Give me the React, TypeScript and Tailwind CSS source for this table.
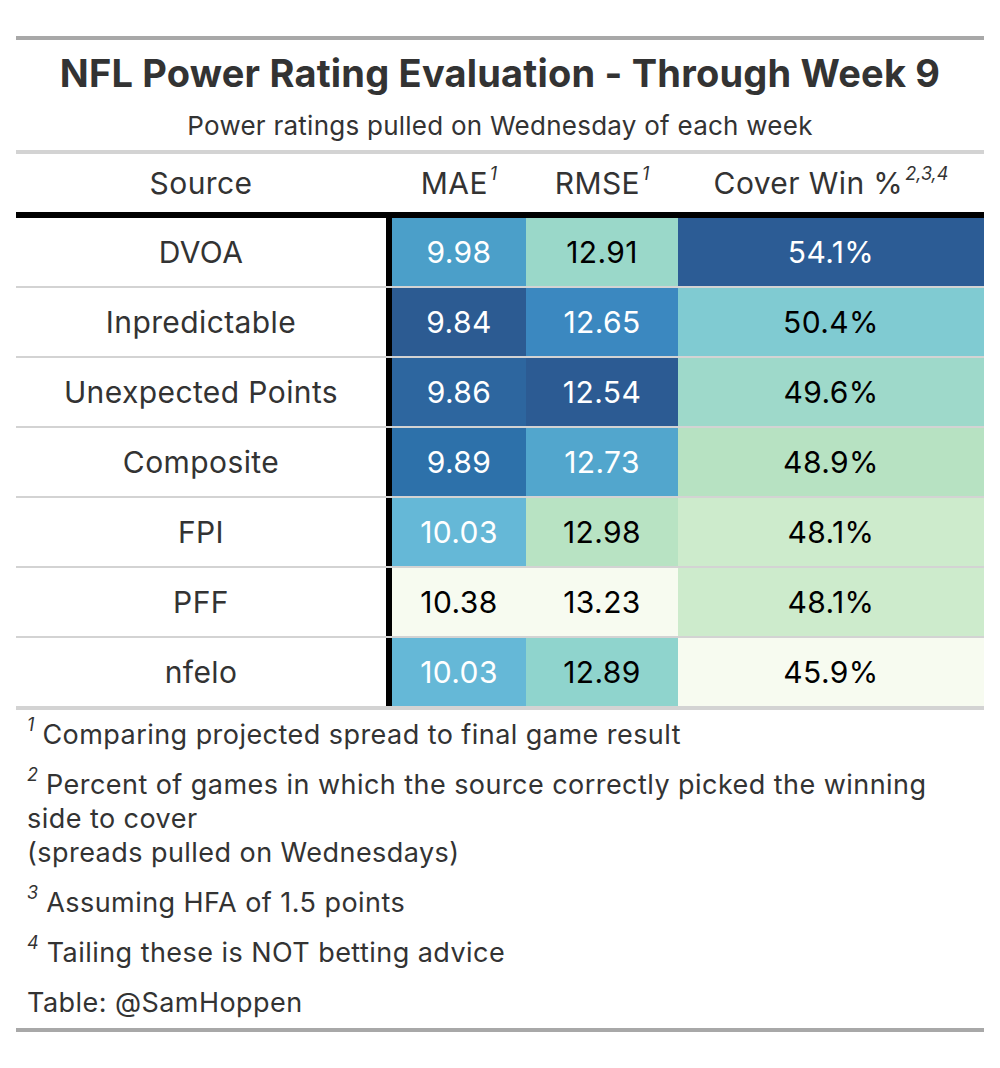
const rows = [
  { source: 'DVOA', mae: ['9.98', '#4b9fc9', true], rmse: ['12.91', '#9ad8c9', false], cover: ['54.1%', '#2c5c95', true] },
  { source: 'Inpredictable', mae: ['9.84', '#2c5b92', true], rmse: ['12.65', '#3b88c0', true], cover: ['50.4%', '#80cbd2', false] },
  { source: 'Unexpected Points', mae: ['9.86', '#2d669f', true], rmse: ['12.54', '#2c5b93', true], cover: ['49.6%', '#9ed9ca', false] },
  { source: 'Composite', mae: ['9.89', '#2d71aa', true], rmse: ['12.73', '#52a6cd', true], cover: ['48.9%', '#b7e2c2', false] },
  { source: 'FPI', mae: ['10.03', '#65b8d7', true], rmse: ['12.98', '#b8e3c3', false], cover: ['48.1%', '#cdebcc', false] },
  { source: 'PFF', mae: ['10.38', '#f7fbf0', false], rmse: ['13.23', '#f7fbf0', false], cover: ['48.1%', '#cdebcc', false] },
  { source: 'nfelo', mae: ['10.03', '#65b8d7', true], rmse: ['12.89', '#8fd4cd', false], cover: ['45.9%', '#f7fbf0', false] },
] as const;

const Sup = ({ children, tight }: { children: React.ReactNode; tight?: boolean }) => (
  <sup className={`italic text-[18px] font-normal tracking-normal -top-[0.75em] ${tight ? 'ml-0' : 'ml-[2px]'}`}>
    {children}
  </sup>
);

const Cell = ({ v }: { v: readonly [string, string, boolean] }) => (
  <div
    className={`flex items-center justify-center ${v[2] ? 'text-white' : 'text-black'}`}
    style={{ backgroundColor: v[1] }}
  >
    {v[0]}
  </div>
);

export default function App() {
  return (
    <div className="min-h-screen bg-white pt-9 px-4 text-[#333333]" style={{ fontFamily: 'Inter, "Liberation Sans", sans-serif' }}>
      <div className="w-[968px] border-t-4 border-[#a8a8a8]">
        {/* Heading */}
        <div className="h-[66px] flex items-center justify-center text-[38px] font-bold tracking-[0.2px]">
          NFL Power Rating Evaluation - Through Week 9
        </div>
        <div className="h-[38px] flex items-center justify-center text-[26px] tracking-[0.25px]">
          Power ratings pulled on Wednesday of each week
        </div>
        <div className="h-[6px] border-b-4 border-[#d3d3d3] box-content" />

        {/* Column labels */}
        <div className="grid grid-cols-[370px_6px_134px_152px_306px] h-[58px] text-[30px] tracking-[0.4px] items-center text-center border-b-[6px] border-black box-content">
          <div>Source</div>
          <div />
          <div>MAE<Sup>1</Sup></div>
          <div>RMSE<Sup>1</Sup></div>
          <div>Cover Win %<Sup>2,3,4</Sup></div>
        </div>

        {/* Body */}
        <div className="text-[30px] tracking-[0.4px]">
          {rows.map((r, i) => (
            <div
              key={r.source}
              className={`grid grid-cols-[370px_6px_134px_152px_306px] h-[68px] box-content ${
                i === rows.length - 1 ? 'border-b-4' : 'border-b-2'
              } border-[#d3d3d3]`}
            >
              <div className="flex items-center justify-center">{r.source}</div>
              <div className="bg-black" />
              <Cell v={r.mae} />
              <Cell v={r.rmse} />
              <Cell v={r.cover} />
            </div>
          ))}
        </div>

        {/* Footnotes */}
        <div className="text-[27px] tracking-[0.45px] leading-[34px] pl-[11px] pr-3">
          <div className="py-2">
            <Sup tight>1</Sup> Comparing projected spread to final game result
          </div>
          <div className="py-2">
            <Sup tight>2</Sup> Percent of games in which the source correctly picked the winning
            <br />
            side to cover
            <br />
            (spreads pulled on Wednesdays)
          </div>
          <div className="py-2">
            <Sup tight>3</Sup> Assuming HFA of 1.5 points
          </div>
          <div className="py-2">
            <Sup tight>4</Sup> Tailing these is NOT betting advice
          </div>
          <div className="py-2">Table: @SamHoppen</div>
        </div>
        <div className="border-b-4 border-[#a8a8a8]" />
      </div>
    </div>
  );
}
